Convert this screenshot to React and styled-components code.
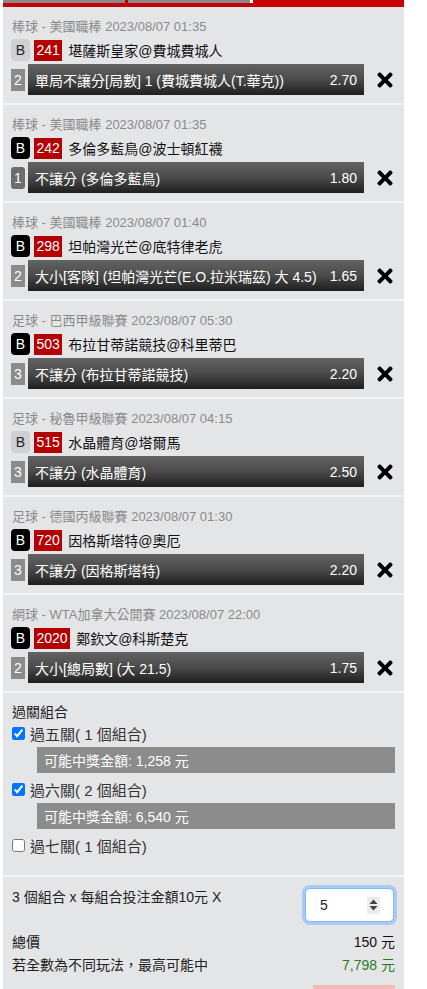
import React from 'react'
import styled, { createGlobalStyle } from 'styled-components'
import { FaTimes } from 'react-icons/fa'

const GlobalStyle = createGlobalStyle`
    body {
        margin: 0;
        background: #fff;
        font-family: "Liberation Sans", Arial, "Noto Sans CJK TC", sans-serif;
        color: #222;
    }
`

const Panel = styled.div`
    margin-left: 3px;
    width: 401px;
    background: #e4e5e7;
`
const TopBar = styled.div`
    background: #c80000;
    height: 7px;
`
const Tabs = styled.div`
    display: flex;
    gap: 3px;
    & > span {
        width: 122px;
        height: 3px;
        background: #888;
    }
    & > span + span {
        border-right: 3px solid #fff;
    }
`
const Item = styled.div`
    padding: 11px 8px 8px 8px;
    border-bottom: 2px solid #f3f3f4;
`
const League = styled.div`
    font-size: 13px;
    line-height: 17px;
    color: #8a8a8a;
    margin-left: 1px;
`
const TeamRow = styled.div`
    display: flex;
    align-items: center;
    margin-top: 4px;
    height: 22px;
    font-size: 14px;
`
const BBadge = styled.span`
    width: 19px;
    height: 22px;
    border-radius: 4px;
    display: flex;
    align-items: center;
    justify-content: center;
    font-size: 14px;
    background: ${p => (p.$dark ? '#000' : '#cfd0d2')};
    color: ${p => (p.$dark ? '#fff' : '#222')};
`
const NumBadge = styled.span`
    background: #b40000;
    color: #fff;
    height: 21px;
    line-height: 21px;
    padding: 0 2.5px;
    margin-left: 4px;
    font-size: 14px;
`
const Teams = styled.span`
    margin-left: 6px;
    color: #111;
`
const BetRow = styled.div`
    display: flex;
    align-items: center;
    margin-top: 3px;
    height: 31px;
`
const Seq = styled.span`
    width: 14px;
    height: 22px;
    display: flex;
    align-items: center;
    justify-content: center;
    color: #fff;
    font-size: 14px;
    background: ${p => (p.$alt ? '#6d6d6d' : '#8b8b8b')};
    border-radius: ${p => (p.$alt ? '3px' : '0')};
`
const Bar = styled.div`
    margin-left: 3px;
    width: 336px;
    height: 31px;
    box-sizing: border-box;
    padding: 0 7px;
    display: flex;
    align-items: center;
    justify-content: space-between;
    color: #fff;
    font-size: 14px;
    background: linear-gradient(to bottom, #636363 0%, #4a4a4a 50%, #1e1e1e 100%);
    white-space: nowrap;
`
const Remove = styled.span`
    margin-left: 10px;
    display: flex;
    align-items: center;
    color: #000;
    font-size: 22px;
`
const Combo = styled.div`
    padding: 10px 9px 19px 9px;
    border-bottom: 2px solid #f3f3f4;
`
const ComboTitle = styled.div`
    font-size: 14px;
    line-height: 18px;
    color: #222;
`
const Option = styled.label`
    display: flex;
    align-items: center;
    height: 22px;
    margin-top: ${p => p.$first ? '1px' : '5px'};
    font-size: 15px;
    color: #333;
    & > input {
        margin: 0 5px 0 0;
        width: 13px;
        height: 13px;
    }
`
const Prize = styled.div`
    margin: 3px 0 0 25px;
    height: 26px;
    background: #8c8c8c;
    color: #fff;
    font-size: 14px;
    display: flex;
    align-items: center;
    padding-left: 7px;
`
const Summary = styled.div`
    padding: 11px 9px 0 9px;
    font-size: 14px;
    color: #222;
`
const StakeRow = styled.div`
    display: flex;
    justify-content: space-between;
    align-items: flex-start;
`
const StakeText = styled.span`
    line-height: 18px;
`
const StakeBox = styled.div`
    width: 60px;
    height: 32px;
    margin-right: 1px;
    padding: 0 13px 0 14px;
    background: #fff;
    border: 1px solid #86b7fe;
    border-radius: 5px;
    box-shadow: 0 0 0 3px #a8cbf6;
    display: flex;
    align-items: center;
`
const StakeInput = styled.input`
    border: none;
    outline: none;
    width: 40px;
    padding: 0;
    font-size: 14px;
    font-family: inherit;
    color: #222;
    background: transparent;
`
const Spinner = styled.span`
    margin-left: auto;
    width: 13px;
    height: 17px;
    background: #ececec;
    display: flex;
    align-items: center;
    justify-content: center;
`
const TotalRow = styled.div`
    display: flex;
    justify-content: space-between;
    line-height: 23px;
    margin-top: ${p => p.$first ? '9px' : '0'};
    & > b {
        font-weight: normal;
        color: ${p => p.$green ? '#2b7a1e' : '#111'};
    }
`
const Submit = styled.div`
    margin: 8px 0 0 auto;
    width: 82px;
    height: 34px;
    background: #f7b8b8;
`

const bets = [
    { league: '棒球 - 美國職棒 2023/08/07 01:35', dark: false, no: '241', teams: '堪薩斯皇家@費城費城人', seq: 2, pick: '單局不讓分[局數] 1 (費城費城人(T.華克))', odds: '2.70' },
    { league: '棒球 - 美國職棒 2023/08/07 01:35', dark: true, no: '242', teams: '多倫多藍鳥@波士頓紅襪', seq: 1, alt: true, pick: '不讓分 (多倫多藍鳥)', odds: '1.80' },
    { league: '棒球 - 美國職棒 2023/08/07 01:40', dark: true, no: '298', teams: '坦帕灣光芒@底特律老虎', seq: 2, pick: '大小[客隊] (坦帕灣光芒(E.O.拉米瑞茲) 大 4.5)', odds: '1.65' },
    { league: '足球 - 巴西甲級聯賽 2023/08/07 05:30', dark: true, no: '503', teams: '布拉甘蒂諾競技@科里蒂巴', seq: 3, pick: '不讓分 (布拉甘蒂諾競技)', odds: '2.20' },
    { league: '足球 - 秘魯甲級聯賽 2023/08/07 04:15', dark: false, no: '515', teams: '水晶體育@塔爾馬', seq: 3, pick: '不讓分 (水晶體育)', odds: '2.50' },
    { league: '足球 - 德國丙級聯賽 2023/08/07 01:30', dark: true, no: '720', teams: '因格斯塔特@奧厄', seq: 3, pick: '不讓分 (因格斯塔特)', odds: '2.20' },
    { league: '網球 - WTA加拿大公開賽 2023/08/07 22:00', dark: true, no: '2020', teams: '鄭欽文@科斯楚克', seq: 2, pick: '大小[總局數] (大 21.5)', odds: '1.75' },
]

const combos = [
    { label: '過五關( 1 個組合)', checked: true, prize: '1,258' },
    { label: '過六關( 2 個組合)', checked: true, prize: '6,540' },
    { label: '過七關( 1 個組合)', checked: false },
]

export default function App() {
    return (
        <>
            <GlobalStyle />
            <Panel>
                <TopBar>
                    <Tabs><span /><span /></Tabs>
                </TopBar>
                {bets.map((b, i) => (
                    <Item key={i}>
                        <League>{b.league}</League>
                        <TeamRow>
                            <BBadge $dark={b.dark}>B</BBadge>
                            <NumBadge>{b.no}</NumBadge>
                            <Teams>{b.teams}</Teams>
                        </TeamRow>
                        <BetRow>
                            <Seq $alt={b.alt}>{b.seq}</Seq>
                            <Bar>
                                <span>{b.pick}</span>
                                <span>{b.odds}</span>
                            </Bar>
                            <Remove><FaTimes /></Remove>
                        </BetRow>
                    </Item>
                ))}
                <Combo>
                    <ComboTitle>過關組合</ComboTitle>
                    {combos.map((c, i) => (
                        <React.Fragment key={i}>
                            <Option $first={i === 0}>
                                <input type="checkbox" defaultChecked={c.checked} />
                                {c.label}
                            </Option>
                            {c.prize && <Prize>可能中獎金額: {c.prize} 元</Prize>}
                        </React.Fragment>
                    ))}
                </Combo>
                <Summary>
                    <StakeRow>
                        <StakeText>3 個組合 x 每組合投注金額10元 X</StakeText>
                        <StakeBox>
                            <StakeInput type="text" defaultValue="5" />
                            <Spinner>
                                <svg width="9" height="12" viewBox="0 0 9 12">
                                    <path d="M4.5 0.5 L8.5 5 L0.5 5 Z M0.5 7 L8.5 7 L4.5 11.5 Z" fill="#444" />
                                </svg>
                            </Spinner>
                        </StakeBox>
                    </StakeRow>
                    <TotalRow $first>
                        <span>總價</span>
                        <b>150 元</b>
                    </TotalRow>
                    <TotalRow $green>
                        <span>若全數為不同玩法，最高可能中</span>
                        <b>7,798 元</b>
                    </TotalRow>
                    <Submit />
                </Summary>
            </Panel>
        </>
    )
}
